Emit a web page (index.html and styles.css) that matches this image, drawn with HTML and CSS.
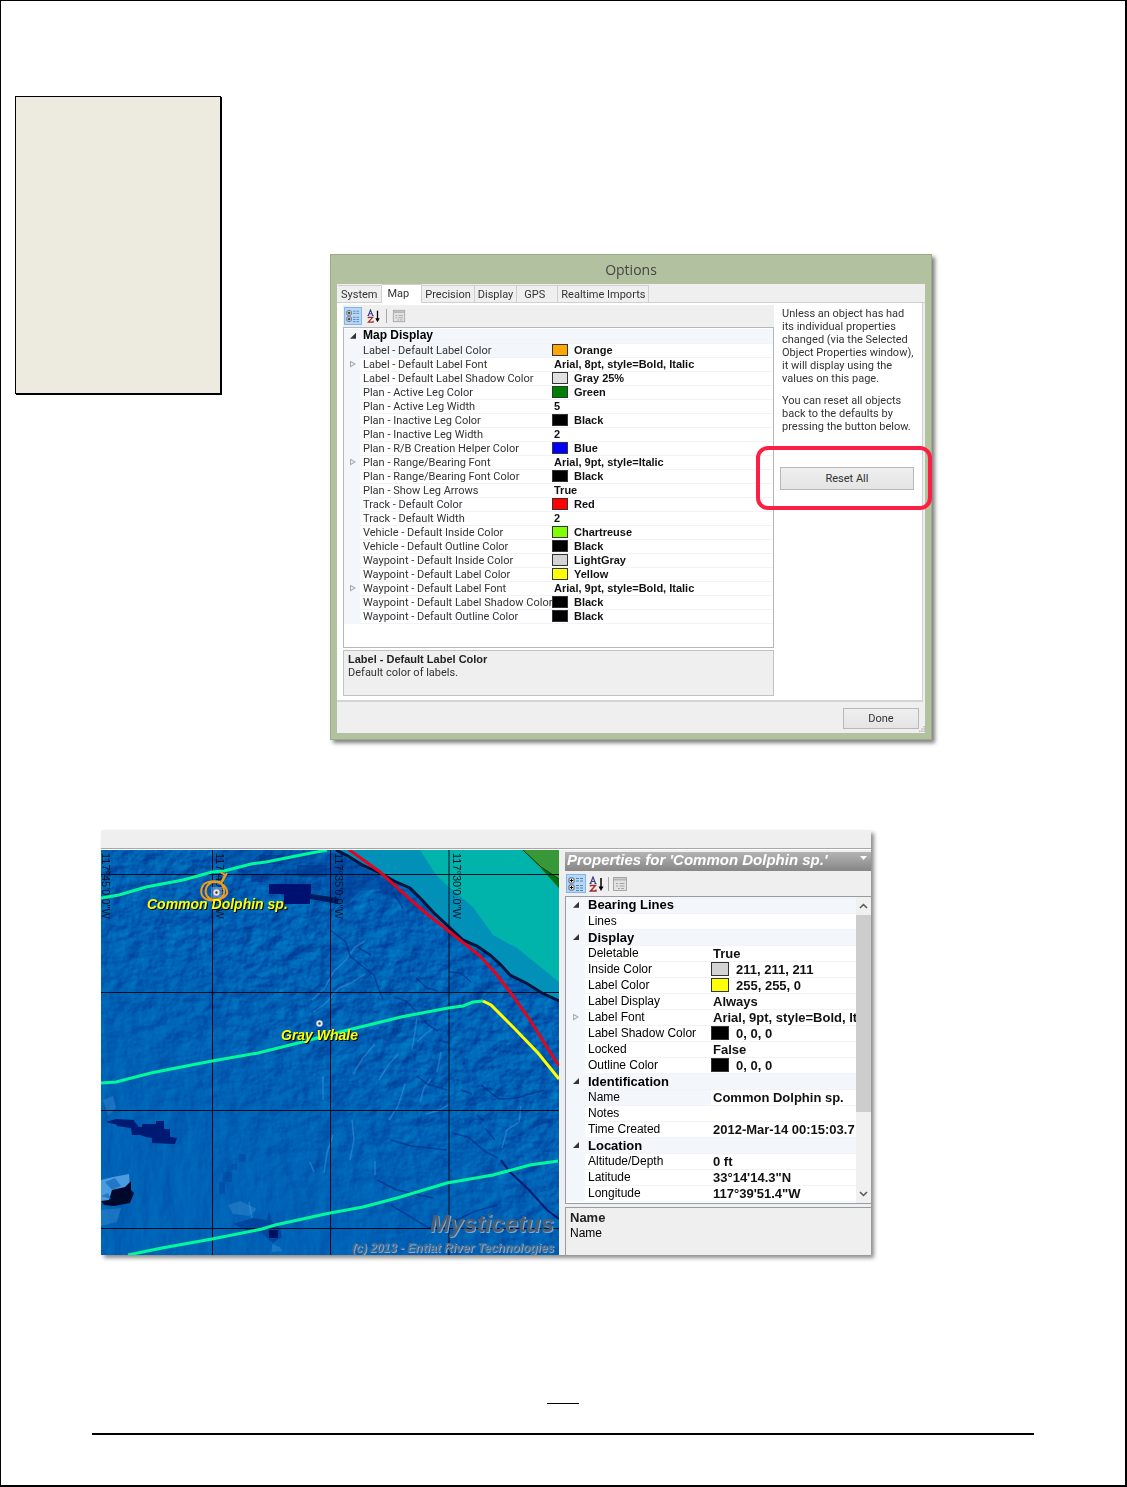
FILE: index.html
```html
<!DOCTYPE html>
<html lang="en">
<head>
    <meta charset="UTF-8">
    <title>Options</title>
    <link rel="stylesheet" href="styles.css">
</head>
<body>
<!-- shared toolbar icons -->
<svg class="defs" width="0" height="0" aria-hidden="true">
    <symbol id="icon-cat" viewBox="0 0 16 16">
        <rect x="1" y="2" width="5" height="5" rx="1" fill="#fff" stroke="#556"/>
        <rect x="1" y="9" width="5" height="5" rx="1" fill="#fff" stroke="#556"/>
        <path d="M2 4.500h3M3.500 3v3M2 11.500h3M3.500 10v3" stroke="#000"/>
        <path d="M8 2.500h3M12 2.500h3M8 5h3M12 5h3M8 9.500h3M12 9.500h3M8 12h3M12 12h3M8 14.500h3M12 14.500h3" stroke="#5a7fb0"/>
    </symbol>
    <symbol id="icon-az" viewBox="0 0 16 16">
        <path d="M1.500 7.500L4 1l2.500 6.500M2.500 5.500h3M.5 7.500h2M5.500 7.500h2" fill="none" stroke="#33418c" stroke-width="1.200"/>
        <path d="M1.500 10.500V9.500h5L1.500 15h5.500v-1.500" fill="none" stroke="#a02c2c" stroke-width="1.400"/>
        <path d="M12 2v11" stroke="#000" stroke-width="1.500"/>
        <path d="M9.500 10.500h5L12 15z" fill="#000"/>
    </symbol>
    <symbol id="icon-page" viewBox="0 0 16 16">
        <rect x="1.500" y="1.500" width="13" height="13" fill="#e2e2e2" stroke="#a5a5a5"/>
        <path d="M2 3.500h12" stroke="#b5b5b5" stroke-width="2"/>
        <path d="M4 7.500h2M7.500 7.500h5M4 10h2M7.500 10h5M6 12.500h2M9 12.500h3" stroke="#a5a5a5"/>
    </symbol>
</svg>

<div class="page">
    <div class="top">
        <aside class="note"></aside>
        <section class="dialog">
            <h1 class="title">Options</h1>
            <div class="client">
                <nav class="tabs">
                    <button class="tab">System</button>
                    <button class="tab active">Map</button>
                    <button class="tab">Precision</button>
                    <button class="tab">Display</button>
                    <button class="tab wide">GPS</button>
                    <button class="tab">Realtime Imports</button>
                </nav>
                <div class="tabpage">
                    <div class="left">
                        <div class="toolbar">
                            <button class="tool on" aria-label="Categorized"><svg><use href="#icon-cat"/></svg></button>
                            <button class="tool" aria-label="Alphabetical"><svg><use href="#icon-az"/></svg></button>
                            <span class="sep"></span>
                            <button class="tool" aria-label="Property Pages"><svg><use href="#icon-page"/></svg></button>
                        </div>
                        <div class="gridbox">
                            <table class="grid">
                                <colgroup><col class="c-gutter"><col class="c-name"><col></colgroup>
                                <tr class="group"><td><button class="toggle open" aria-label="Collapse"></button></td><th colspan="2">Map Display</th></tr>
                                <tr class="selected"><td></td><th>Label - Default Label Color</th><td><span class="swatch orange"></span>Orange</td></tr>
                                <tr><td><button class="toggle" aria-label="Expand"></button></td><th>Label - Default Label Font</th><td>Arial, 8pt, style=Bold, Italic</td></tr>
                                <tr><td></td><th>Label - Default Label Shadow Color</th><td><span class="swatch gray"></span>Gray 25%</td></tr>
                                <tr><td></td><th>Plan - Active Leg Color</th><td><span class="swatch green"></span>Green</td></tr>
                                <tr><td></td><th>Plan - Active Leg Width</th><td>5</td></tr>
                                <tr><td></td><th>Plan - Inactive Leg Color</th><td><span class="swatch black"></span>Black</td></tr>
                                <tr><td></td><th>Plan - Inactive Leg Width</th><td>2</td></tr>
                                <tr><td></td><th>Plan - R/B Creation Helper Color</th><td><span class="swatch blue"></span>Blue</td></tr>
                                <tr><td><button class="toggle" aria-label="Expand"></button></td><th>Plan - Range/Bearing Font</th><td>Arial, 9pt, style=Italic</td></tr>
                                <tr><td></td><th>Plan - Range/Bearing Font Color</th><td><span class="swatch black"></span>Black</td></tr>
                                <tr><td></td><th>Plan - Show Leg Arrows</th><td>True</td></tr>
                                <tr><td></td><th>Track - Default Color</th><td><span class="swatch red"></span>Red</td></tr>
                                <tr><td></td><th>Track - Default Width</th><td>2</td></tr>
                                <tr><td></td><th>Vehicle - Default Inside Color</th><td><span class="swatch chartreuse"></span>Chartreuse</td></tr>
                                <tr><td></td><th>Vehicle - Default Outline Color</th><td><span class="swatch black"></span>Black</td></tr>
                                <tr><td></td><th>Waypoint - Default Inside Color</th><td><span class="swatch lightgray"></span>LightGray</td></tr>
                                <tr><td></td><th>Waypoint - Default Label Color</th><td><span class="swatch yellow"></span>Yellow</td></tr>
                                <tr><td><button class="toggle" aria-label="Expand"></button></td><th>Waypoint - Default Label Font</th><td>Arial, 9pt, style=Bold, Italic</td></tr>
                                <tr><td></td><th>Waypoint - Default Label Shadow Color</th><td><span class="swatch black"></span>Black</td></tr>
                                <tr><td></td><th>Waypoint - Default Outline Color</th><td><span class="swatch black"></span>Black</td></tr>
                            </table>
                        </div>
                        <div class="desc">
                            <b>Label - Default Label Color</b>
                            <p>Default color of labels.</p>
                        </div>
                    </div>
                    <div class="right">
                        <p>Unless an object has had<br>its individual properties<br>changed (via the Selected<br>Object Properties window),<br>it will display using the<br>values on this page.</p>
                        <p>You can reset all objects<br>back to the defaults by<br>pressing the button below.</p>
                        <div class="reset">
                            <button class="btn">Reset All</button>
                            <span class="ring"></span>
                        </div>
                    </div>
                </div>
                <div class="actions">
                    <button class="btn done">Done</button>
                    <svg class="grip" viewBox="0 0 8 8"><path d="M6 0h2v2H6zM3 3h2v2H3zM6 3h2v2H6zM0 6h2v2H0zM3 6h2v2H3zM6 6h2v2H6z" fill="#b8b8b8"/></svg>
                </div>
            </div>
        </section>
    </div>

    <section class="viewer">
        <div class="strip"></div>
        <div class="panes">
            <svg class="map" viewBox="0 0 458 405" preserveAspectRatio="xMidYMid slice">
                <defs>
                    <filter id="relief" x="0" y="0" width="100%" height="100%" color-interpolation-filters="sRGB">
                        <feTurbulence type="fractalNoise" baseFrequency="0.045 0.02" numOctaves="4" seed="8"/>
                        <feDiffuseLighting surfaceScale="2" diffuseConstant="0.95" lighting-color="#fff"><feDistantLight azimuth="200" elevation="32"/></feDiffuseLighting>
                    </filter>
                    <filter id="rough" x="0" y="0" width="100%" height="100%" color-interpolation-filters="sRGB">
                        <feTurbulence type="fractalNoise" baseFrequency="0.05 0.07" numOctaves="4" seed="3"/>
                        <feDiffuseLighting surfaceScale="4" diffuseConstant="0.9" lighting-color="#fff"><feDistantLight azimuth="220" elevation="32"/></feDiffuseLighting>
                    </filter>
                    <linearGradient id="fade" x1="0.2" y1="0.85" x2="0.6" y2="0.25">
                        <stop offset="0" stop-color="#000"/><stop offset="0.8" stop-color="#fff"/>
                    </linearGradient>
                    <mask id="slope"><rect width="458" height="405" fill="url(#fade)"/></mask>
                </defs>
                <rect width="458" height="405" fill="#0062b6"/>
                <g class="texture"><rect width="458" height="405" filter="url(#relief)"/></g>
                <g class="texture strong" mask="url(#slope)"><rect width="458" height="405" filter="url(#rough)"/></g>

                <!-- trenches and ridges -->
                <g fill="#002f8c">
                    <path d="M125 0h60l44 4v48l-24-4h-20l-20-12-18-8-22-16z" opacity=".25"/>
                    <path d="M229 2l20 8 40 22 30 25-10 2-30-20-20 2-14 14-16-3z" opacity=".4"/>
                    <path d="M150 24h12v8h-12zM158 5h24v9h-24zM196 15h30v12h-30z" opacity=".5"/>
                    <path d="M168 34h42v10h-42zM183 44h26v10h-26z" fill="#001070"/>
                    <path d="M209 44l28 4v6l-28-5z" fill="#001a60"/>
                    <path d="M5 272l10-3 18 2 4 5h-16zM15 269l18 1v6l8 1v-3h14v-3h8v8h6v8l7 1-2 6-23-1v-5l-6-1-6-2h-8l-1-7-14-2z" fill="#001a74"/>
                    <path d="M138 304h7v8h-7zM130 314h6v6h-6zM122 322h9v10h-9zM118 332h6v12h-6z" opacity=".3"/>
                    <path d="M132 374l20-6 14 2 2-8 3 9 8 8 2 8-9 6-5-4-6-6-14-2z" opacity=".55"/>
                    <path d="M168 380h9v8h-9z" fill="#001060"/>
                </g>
                <path d="M0 330l12-3 16-3 1 14-12 2-10 14-7-2z" fill="#4a9bdf"/>
                <path d="M11 340l13-3 6-6v9l3 3-4 10-16 3-10-1-3-4 8-1z" fill="#00082c"/>
                <path d="M4 332l10-4 6 8-9 4zM0 346l7-3 3 6z" fill="#2377c7"/>
                <path d="M127 355l12-4 17 8-8 7-16-2zM171 394l8 3 2 4-10 1zM2 250l10-4 3 12-8 8zM0 360l20-2-4 14-16 4z" fill="#3a8bd0" opacity=".45"/>
                <g class="ridge">
                    <path d="M211 150l12-11 10-18 11-10 10-14 10-6M212 162l12-8 14-16 12-5 14-9M278 230l10-16 9-10M288 270l9-14 7-22M319 252l4-14 7-9M401 298l5-18 12-8 2-16M249 310l4-20-2-20M274 325v-14M311 200l3-18 2-14M336 222l4-20M222 250v-24M213 322l-4-10M148 352l3 16"/>
                    <path d="M316 192l8-8 9-6M252 224l10-16 12-14M325 264l14-4 10-6M232 285l-6 18-3 20"/>
                </g>
                <g class="crack">
                    <path d="M229 80l16 12 4 14 12 10 12 9 5 15 4 9M293 147l12 4 10 10 12 14 10 6M315 128l11 10 11 3M348 122l12 1 10 9M316 226l10 8 20 6M360 240l11 4M380 235l18 14 18-1 16-5 11-3M376 265l7 6M384 278l10 12M351 283l16 4 18 15 12 6M292 42l10 16M290 290l20 6 36 4M290 355l36 22 20 1M276 330l20 10 36 8M345 375l30-14 22-6M338 190l10 3M258 98l12 7"/>
                </g>
                <path class="canyon" d="M400 310l8 11 20 19 18 20 12 9"/>

                <!-- shelf and land -->
                <path d="M239 0L279 23L309 38L346 75L362 90L389 105L409 125L457 151H458V0z" fill="#0090b8"/>
                <path d="M319 0L335 25L349 38L372 57L392 85L416 98L458 132V0z" fill="#00b4ac"/>
                <path d="M422 0L458 38V0z" fill="#389838"/>
                <path d="M440 18L458 29V38z" fill="#007010"/>
                <path d="M422 0L440 17L458 29" fill="none" stroke="#031" />
                <path class="edge" d="M235 0l12 6 14 9 18 8 14 8 16 7 12 12 12 13 13 12 16 15 14 6 13 9 10 9 10 11 16 8 16 10 17 8"/>

                <path class="lines" d="M111.500 0V405M229.500 0V405M348 0V405M0 24.500H458M0 142.500H458M0 260.500H458M0 378.500H458"/>
                <g class="coord">
                    <text transform="translate(1 3) rotate(90)">117°45'0.0"W</text>
                    <text transform="translate(115 3) rotate(90)">117°40'0.0"W</text>
                    <text transform="translate(234 3) rotate(90)">117°35'0.0"W</text>
                    <text transform="translate(352 3) rotate(90)">117°30'0.0"W</text>
                </g>

                <g class="track">
                    <path d="M0 48L18 45L45 37L82 30L111 22L123 21L150 14L165 12L200 5L226 0"/>
                    <path d="M0 233L15 232L50 223L70 219L111 211L157 203L201 192L239 182L300 167L347 158L362 156L372 152L382 151"/>
                    <path d="M27 405L61 398L111 389L161 379L174 375L229 363L262 357L296 348L346 333L392 325L429 315L457 311"/>
                    <path class="yellowline" d="M382 151L390 155L413 178L437 203L458 229"/>
                    <path class="redline" d="M247 -1L279 22L312 52L326 64L349 82L379 106L396 125L409 142L429 170L449 202L458 216"/>
                </g>
                <g class="orbit">
                    <path d="M121 33C116 30 107 31 103 34C99 39 99 46 105 49C112 52 121 51 126 44C127 38 121 31 112 32C105 34 103 41 106 46C109 50 117 51 121 47C126 42 122 36 120 33L124 25L119 22M121 32l5-9"/>
                </g>
                <rect x="110" y="37" width="11" height="11" fill="#8c9cc4" opacity=".6"/>
                <circle class="mark" cx="115.500" cy="42.500" r="2.200"/>
                <circle class="mark" cx="218.500" cy="173.500" r="2.200"/>
                <g class="label">
                    <text x="46" y="59">Common Dolphin sp.</text>
                    <text x="180" y="190">Gray Whale</text>
                </g>
                <g class="brand">
                    <text class="name" x="329" y="382">Mysticetus</text>
                    <text x="251" y="402">(c) 2013 - Entiat River Technologies</text>
                </g>
            </svg>

            <div class="props">
                <h2 class="caption">Properties for 'Common Dolphin sp.'<button class="menu" aria-label="Panel menu"></button></h2>
                <div class="toolbar">
                    <button class="tool on" aria-label="Categorized"><svg><use href="#icon-cat"/></svg></button>
                    <button class="tool" aria-label="Alphabetical"><svg><use href="#icon-az"/></svg></button>
                    <span class="sep"></span>
                    <button class="tool" aria-label="Property Pages"><svg><use href="#icon-page"/></svg></button>
                </div>
                <div class="gridbox">
                    <table class="grid">
                        <colgroup><col class="c-gutter"><col class="c-name"><col></colgroup>
                        <tr class="group"><td><button class="toggle open" aria-label="Collapse"></button></td><th colspan="2">Bearing Lines</th></tr>
                        <tr><td></td><th>Lines</th><td></td></tr>
                        <tr class="group"><td><button class="toggle open" aria-label="Collapse"></button></td><th colspan="2">Display</th></tr>
                        <tr><td></td><th>Deletable</th><td>True</td></tr>
                        <tr><td></td><th>Inside Color</th><td><span class="swatch lightgray"></span>211, 211, 211</td></tr>
                        <tr><td></td><th>Label Color</th><td><span class="swatch yellow"></span>255, 255, 0</td></tr>
                        <tr><td></td><th>Label Display</th><td>Always</td></tr>
                        <tr><td><button class="toggle" aria-label="Expand"></button></td><th>Label Font</th><td>Arial, 9pt, style=Bold, Italic</td></tr>
                        <tr><td></td><th>Label Shadow Color</th><td><span class="swatch black"></span>0, 0, 0</td></tr>
                        <tr><td></td><th>Locked</th><td>False</td></tr>
                        <tr><td></td><th>Outline Color</th><td><span class="swatch black"></span>0, 0, 0</td></tr>
                        <tr class="group"><td><button class="toggle open" aria-label="Collapse"></button></td><th colspan="2">Identification</th></tr>
                        <tr class="selected"><td></td><th>Name</th><td>Common Dolphin sp.</td></tr>
                        <tr><td></td><th>Notes</th><td></td></tr>
                        <tr><td></td><th>Time Created</th><td>2012-Mar-14 00:15:03.7</td></tr>
                        <tr class="group"><td><button class="toggle open" aria-label="Collapse"></button></td><th colspan="2">Location</th></tr>
                        <tr><td></td><th>Altitude/Depth</th><td>0 ft</td></tr>
                        <tr><td></td><th>Latitude</th><td>33°14'14.3"N</td></tr>
                        <tr><td></td><th>Longitude</th><td>117°39'51.4"W</td></tr>
                    </table>
                    <div class="scroll">
                        <button aria-label="Scroll up"><svg viewBox="0 0 9 6"><path d="M1 5l3.500-3.500L8 5"/></svg></button>
                        <div class="thumb"></div>
                        <button aria-label="Scroll down"><svg viewBox="0 0 9 6"><path d="M1 1l3.500 3.500L8 1"/></svg></button>
                    </div>
                </div>
                <div class="desc">
                    <b>Name</b>
                    <p>Name</p>
                </div>
            </div>
        </div>
    </section>

    <footer class="footer">
        <hr class="dash">
        <hr class="rule">
    </footer>
</div>
</body>
</html>
```

FILE: styles.css
```css
*{
    box-sizing: border-box;
}
body{
    margin:0;
    background-color: #fff;
    font-family: "Liberation Sans", Arial, sans-serif;
    color:#000;
}
p,h1,h2{
    margin:0;
}
button{
    padding:0;
    border:0;
    background: none;
    font: inherit;
    color: inherit;
}
.defs{
    position: absolute;
}
.page{
    display: flex;
    flex-direction: column;
    min-height: 100vh;
    border:1px solid #000;
    border-right-width: 2px;
    border-bottom-width: 2px;
    padding:95px 91px 50px 14px;
}
.top{
    display: flex;
    align-items: flex-start;
}
.note{
    flex:0 0 206px;
    height:298px;
    background-color: #edebe0;
    border:1px solid #000;
    box-shadow: 1px 1px 0 #000;
}

/* options dialog */
.dialog{
    flex:0 1 602px;
    margin:158px 0 0 109px;
    padding:0 6px 6px;
    background-color: #b2c19f;
    border:1px solid #9dab8b;
    box-shadow: 3px 3px 4px rgba(0,0,0,0.5);
    font-family: Roboto, "Liberation Sans", sans-serif;
    font-size: 11px;
    color:#333;
}
.title{
    height:29px;
    font: 14px/29px "Open Sans", sans-serif;
    text-align: center;
    color:#444;
}
.client{
    background-color: #efefef;
}
.tabs{
    display: flex;
    align-items: flex-end;
    height:19px;
    padding-left: 1px;
    border-bottom: 1px solid #d0d0d0;
}
.tab{
    height:17px;
    padding:0 3px;
    border:1px solid #cfcfcf;
    border-width: 1px 1px 0 0;
}
.tab.active{
    height:19px;
    margin-bottom: -1px;
    padding:0 12px 2px 6px;
    background-color: #fff;
}
.tab.wide{
    padding-right: 12px;
    padding-left: 7px;
}
.tabpage{
    display: flex;
    margin-right: 2px;
    padding:2px 0 4px 6px;
    background-color: #fff;
    border-right: 1px solid #d0d0d0;
    border-bottom: 2px solid #d4d4d4;
}
.left{
    flex:1;
    min-width: 0;
}
.right{
    flex:0 0 148px;
    padding:2px 8px 0 8px;
    line-height: 13px;
}
.right p{
    margin-bottom: 9px;
}
.toolbar{
    display: flex;
    align-items: center;
    gap:3px;
    height:22px;
    padding-left: 1px;
    background-color: #efefef;
}
.tool{
    display: flex;
    align-items: center;
    justify-content: center;
    width:18px;
    height:18px;
}
.tool svg{
    width:14px;
    height:14px;
}
.tool.on{
    background-color: #b5d7f8;
    border:1px solid #7fb6ec;
}
.sep{
    width:1px;
    height:14px;
    background-color: #a8a8a8;
}
.gridbox{
    display: flex;
    align-items: flex-start;
    height:321px;
    padding-top: 1px;
    background-color: #fff;
    border:1px solid #b4b8be;
    overflow: hidden;
}
.grid{
    flex:1;
    width:100%;
    min-width: 0;
    table-layout: fixed;
    border-collapse: collapse;
}
.c-gutter{
    width:16px;
}
.c-name{
    width:192px;
}
.grid tr{
    height:14px;
}
.grid th,.grid td{
    height:14px;
    padding:0 0 0 3px;
    line-height: 13px;
    border-bottom: 1px solid #f0f3f8;
    text-align: left;
    white-space: nowrap;
    overflow: hidden;
    font-weight: normal;
}
.grid td{
    padding-left: 2px;
    font-family: "Liberation Sans", Arial, sans-serif;
    font-weight: bold;
    color:#111;
}
.grid td:first-child{
    background-color: #f3f6fb;
    border-color: #f3f6fb;
}
.grid .group th,.selected th{
    background-color: #f3f6fb;
}
.grid .group th{
    font-family: "Liberation Sans", Arial, sans-serif;
    font-weight: bold;
    font-size: 12px;
    color:#000;
}
.toggle{
    display: block;
    width:6px;
    height:7px;
    margin-left: 4px;
    background-color: #aaa;
    clip-path: polygon(0 0,100% 50%,0 100%,0 0,1px 2px,1px 5px,4px 50%,1px 2px);
}
.toggle.open{
    height:6px;
    background-color: #333;
    clip-path: polygon(100% 0,100% 100%,0 100%);
}
.swatch{
    display: inline-block;
    width:16px;
    height:12px;
    margin:0 6px 0 -2px;
    border:1px solid #333;
    vertical-align: top;
}
.orange{ background-color: #ffa500; }
.gray{ background-color: #e0e0e0; }
.green{ background-color: #008000; }
.black{ background-color: #000; }
.blue{ background-color: #0000ff; }
.red{ background-color: #ff0000; }
.chartreuse{ background-color: #7fff00; }
.lightgray{ background-color: #d3d3d3; }
.yellow{ background-color: #ffff00; }
.desc{
    height:46px;
    margin-top: 2px;
    padding:2px 4px;
    line-height: 13px;
    background-color: #efefef;
    border:1px solid #c2c2c2;
}
.desc b{
    font-family: "Liberation Sans", Arial, sans-serif;
    color:#222;
}
.btn{
    width:100%;
    height:23px;
    background: linear-gradient(#efefef,#e4e4e4);
    border:1px solid #b8b8b8;
}
/* highlight drawn round the reset button */
.reset{
    position: relative;
    margin:34px 0 0 -2px;
}
.ring{
    position: absolute;
    top:-21px;
    right:-18px;
    bottom:-20px;
    left:-24px;
    border:4px solid #fb2043;
    border-radius: 12px;
    pointer-events: none;
}
.actions{
    display: flex;
    justify-content: flex-end;
    align-items: flex-end;
    height:31px;
    padding-bottom: 1px;
}
.done{
    width:76px;
    height:21px;
    margin-bottom: 3px;
}
.grip{
    width:6px;
    height:6px;
}

/* map and properties window */
.viewer{
    width:100%;
    max-width: 770px;
    margin:90px 0 0 86px;
    background-color: #efefef;
    box-shadow: 3px 3px 4px rgba(0,0,0,0.45);
}
.strip{
    height:20px;
    border-bottom: 1px solid #fff;
    box-shadow: inset 0 -1px #a8a8a8;
}
.panes{
    display: flex;
}
.map{
    flex:1;
    min-width: 0;
    height:405px;
}
.texture{
    mix-blend-mode: soft-light;
    opacity: 0.4;
}
.strong{
    opacity: 0.6;
}
.ridge,.crack,.canyon,.edge,.lines,.track path,.orbit path{
    fill:none;
}
.ridge{
    stroke:#3e96dc;
    stroke-width: 1.5;
    opacity: 0.5;
}
.crack{
    stroke:#002a80;
    stroke-width: 1.5;
    opacity: 0.6;
}
.canyon{
    stroke:#001a6c;
    stroke-width: 2;
}
.edge{
    stroke:#00143c;
    stroke-width: 3;
}
.lines{
    stroke:#000c20;
    stroke-width: 1;
}
.coord{
    font-size: 11px;
    fill:#001028;
}
.track path{
    stroke:#00fa9a;
    stroke-width: 3;
}
.track .yellowline{
    stroke:#ffff00;
}
.track .redline{
    stroke:#e2061c;
}
.orbit path{
    stroke:#f09a1c;
    stroke-width: 2;
}
.mark{
    fill:#333;
    stroke:#e4e4e4;
    stroke-width: 2;
}
.label{
    font-size: 14px;
    font-weight: bold;
    font-style: italic;
    fill:#ffff00;
    text-shadow: 1px 1px 0 #000;
}
.brand{
    font-size: 12px;
    font-weight: bold;
    font-style: italic;
    fill:#4c6c8c;
    text-shadow: 1px 1px 0 #86a8c8;
}
.brand .name{
    font-size: 24px;
    fill:#4a5f74;
}
.props{
    flex:0 0 312px;
    min-width: 0;
    padding:2px 0 0 6px;
    font-size: 12px;
}
.caption{
    display: flex;
    justify-content: space-between;
    height:19px;
    padding:0 4px 0 2px;
    font: italic bold 15px/16px "Liberation Sans", Arial, sans-serif;
    color:#fff;
    white-space: nowrap;
    background: linear-gradient(#b4b4b4,#868686);
}
.menu{
    width:7px;
    height:4px;
    margin-top: 4px;
    background-color: #fff;
    clip-path: polygon(0 0,100% 0,50% 100%);
}
.props .toolbar{
    gap:1px;
    height:25px;
}
.props .tool{
    width:20px;
    height:19px;
}
.props .tool svg{
    width:16px;
    height:16px;
}
.props .gridbox{
    height:308px;
    padding:0;
    border-color: #979ba2;
    border-right: 0;
}
.props .c-gutter{
    width:19px;
}
.props .c-name{
    width:126px;
}
.props .grid tr,.props .grid th,.props .grid td{
    height:16px;
    line-height: 15px;
}
.props .grid td,.props .grid .group th{
    font-size: 13px;
}
.props .toggle{
    margin-left: 5px;
}
.props .swatch{
    width:18px;
    height:14px;
    margin-right: 7px;
}
.scroll{
    display: flex;
    flex-direction: column;
    flex:0 0 15px;
    height:100%;
    background-color: #f0f0f0;
}
.scroll button{
    display: flex;
    align-items: center;
    justify-content: center;
    flex:0 0 18px;
}
.scroll svg{
    width:9px;
    height:6px;
    fill:none;
    stroke:#555;
    stroke-width: 1.5;
}
.thumb{
    flex:0 0 197px;
    margin-bottom: auto;
    background-color: #cdcdcd;
}
.props .desc{
    height:48px;
    margin-top: 3px;
    line-height: 15px;
    border-color: #979ba2;
    border-width: 1px 0 0 1px;
}
.props .desc b{
    font-size: 13px;
}

.footer{
    margin:auto 0 0 77px;
}
.dash{
    width:32px;
    height:1px;
    margin:0 auto 29px;
    border:0;
    background-color: #000;
}
.rule{
    height:2px;
    margin:0;
    border:0;
    background-color: #000;
}
```
